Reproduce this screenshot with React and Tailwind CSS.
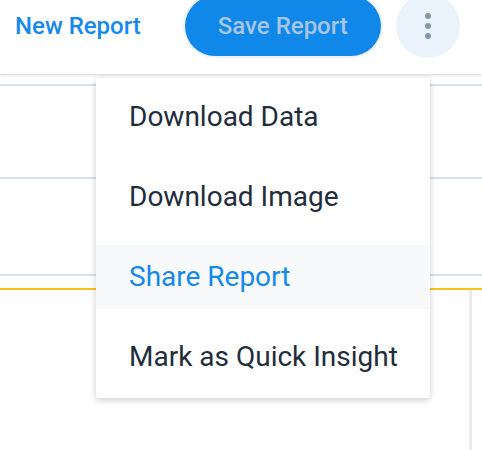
import React from "react";

const menuItems = [
  { label: "Download Data" },
  { label: "Download Image" },
  { label: "Share Report", active: true },
  { label: "Mark as Quick Insight" },
];

const App = () => {
  return (
    <div className="relative w-[482px] h-[450px] overflow-hidden bg-white font-['Roboto',sans-serif]">
      {/* top bar */}
      <div className="relative z-10 h-[74px] bg-white shadow-[0_1px_3px_rgba(0,0,0,0.18)]">
        <div className="flex items-center h-[52px] pl-[15px]">
          <span className="text-[24px] font-medium text-[#1589ee]">New Report</span>
          <button className="ml-[44px] h-[60px] w-[196px] rounded-full bg-[#1088ea] ring-2 ring-[#eef2f6] text-[24px] font-medium text-[#a8c6e3]">
            Save Report
          </button>
          <button className="ml-[15px] flex h-[64px] w-[64px] flex-col items-center justify-center gap-[4px] rounded-full bg-[#eaf3fb]">
            <span className="h-[6px] w-[6px] rounded-full bg-[#8396ac]" />
            <span className="h-[6px] w-[6px] rounded-full bg-[#8396ac]" />
            <span className="h-[6px] w-[6px] rounded-full bg-[#8396ac]" />
          </button>
        </div>
      </div>

      {/* report grid behind */}
      <div className="pt-[10px]">
        <div className="h-[2px] bg-[#d8e0ea]" />
        <div className="h-[91px]" />
        <div className="h-[2px] bg-[#d8e0ea]" />
        <div className="h-[95px]" />
        <div className="h-[2px] bg-[#d8e0ea]" />
        <div className="h-[12px]" />
        <div className="h-[2px] bg-[#f8c21c]" />
        <div className="flex justify-end pr-[10px]">
          <div className="h-[200px] w-[3px] bg-[#ebebeb]" />
        </div>
      </div>

      {/* dropdown menu */}
      <div className="absolute left-[96px] top-[78px] z-20 w-[334px] rounded-b-[3px] bg-white pt-[7px] pb-[9px] shadow-[0_2px_6px_rgba(0,0,0,0.2)]">
        <div className="flex flex-col gap-[16px]">
          {menuItems.map((item) => (
            <div
              key={item.label}
              className={`flex h-[64px] items-center pl-[33px] text-[28px] ${
                item.active ? "bg-[#f7f9fb] text-[#1589ee]" : "text-[#1f2d3d]"
              }`}
            >
              {item.label}
            </div>
          ))}
        </div>
      </div>
    </div>
  );
};

export default App;
